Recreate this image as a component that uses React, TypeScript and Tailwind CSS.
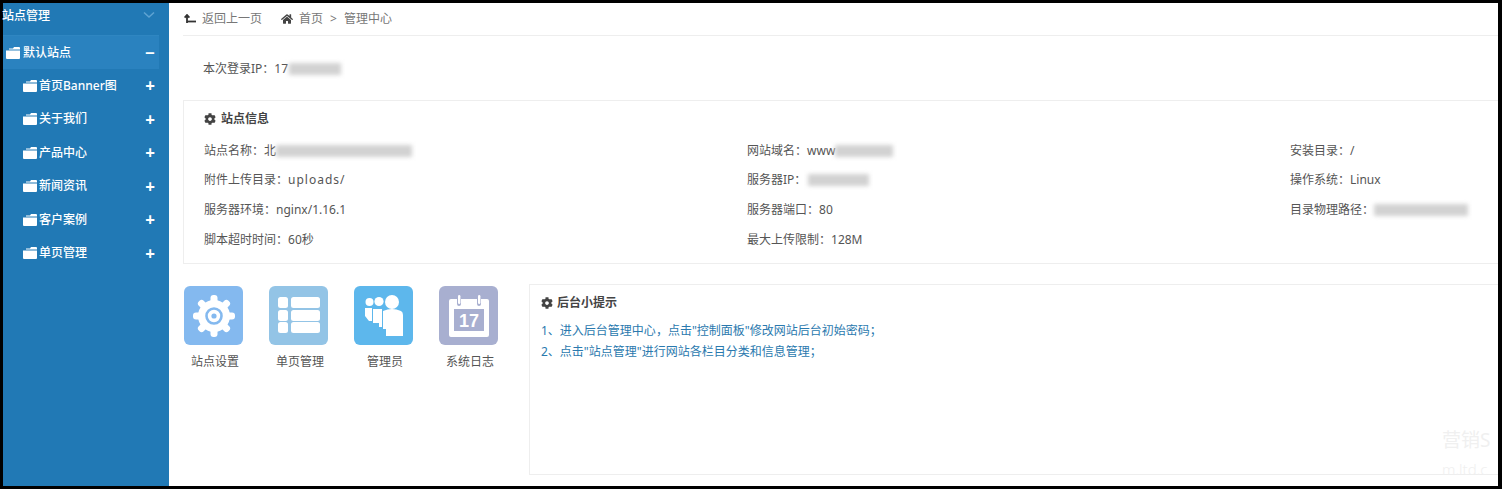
import React from "react";
import { FaCog, FaHome } from "react-icons/fa";

const cjk = { fontFamily: '"Noto Sans", "Noto Sans CJK SC", sans-serif' };

const menu = ["首页Banner图", "关于我们", "产品中心", "新闻资讯", "客户案例", "单页管理"];

// full-width punctuation
const COLON = "\uFF1A";
const COMMA = "\uFF0C";
const SEMI = "\uFF1B";

const Smudge = ({ className }: { className: string }) => (
  <span className={`inline-block h-[12px] bg-[#d2d2d2] blur-[2px] align-middle ${className}`} />
);

const Folder = () => (
  <svg width="14" height="12" viewBox="0 0 14 12" className="shrink-0" fill="#fff">
    <path d="M3 1.5 H7 L8 0 H13 a1 1 0 0 1 1 1 V2.4 H3 Z" />
    <path d="M0 3.4 H14 V11 a1 1 0 0 1-1 1 H1 a1 1 0 0 1-1-1 Z" />
  </svg>
);

const SideRow = ({ label }: { label: string }) => (
  <div className="h-[33.5px] flex items-center pl-[20px] pr-[14px] text-white">
    <Folder />
    <span className="ml-[2px] flex-1 font-medium">{label}</span>
    <span className="text-[17px] font-bold leading-none">+</span>
  </div>
);

const Info = ({ label, children }: { label: string; children?: React.ReactNode }) => (
  <div className="h-[29.6px] flex items-center whitespace-nowrap">
    {label}
    {COLON}
    {children}
  </div>
);

const Tile = ({ color, label, children }: { color: string; label: string; children: React.ReactNode }) => (
  <div className="w-[85px] shrink-0">
    <div className={`w-[59px] h-[59px] rounded-[6px] flex items-center justify-center ${color}`}>{children}</div>
    <div className="w-[62px] mt-[8px] text-center whitespace-nowrap text-[#555]">{label}</div>
  </div>
);

const GearIcon = () => (
  <svg width="44" height="44" viewBox="0 0 44 44">
    <g fill="#fff">
      {[0, 45, 90, 135, 180, 225, 270, 315].map((a) => (
        <rect key={a} x="18.5" y="1" width="7" height="10" rx="3" transform={`rotate(${a} 22 22)`} />
      ))}
      <circle cx="22" cy="22" r="16" />
    </g>
    <circle cx="22" cy="22" r="7.5" fill="none" stroke="#84b9ef" strokeWidth="2.6" />
    <circle cx="22" cy="22" r="2.6" fill="#84b9ef" />
  </svg>
);

const ListIcon = () => (
  <svg width="42" height="37" viewBox="0 0 42 37" fill="#fff">
    {[0, 13, 25].map((y) => (
      <g key={y}>
        <rect x="0" y={y} width="10" height="11" rx="2.5" />
        <rect x="13" y={y} width="29" height="11" rx="2.5" />
      </g>
    ))}
  </svg>
);

const PeopleIcon = () => (
  <svg width="38" height="42" viewBox="0 0 38 42" fill="#fff">
    <circle cx="4.5" cy="7" r="4" />
    <circle cx="14" cy="6.5" r="4.6" />
    <circle cx="27" cy="7" r="7" />
    <path d="M0 13 H7 V26 H4 L0 21 Z" />
    <path d="M8 14 H17 V32 H14 V28 H8 Z" />
    <path d="M18 16 Q27 12 36 16 Q38 17 38 20 V41 H21 V34 H18 Z" />
  </svg>
);

const CalendarIcon = () => (
  <svg width="40" height="42" viewBox="0 0 40 42">
    <path d="M2 4 H8 V9 a2 2 0 0 0 4 0 V4 H28 V9 a2 2 0 0 0 4 0 V4 H38 a2 2 0 0 1 2 2 V40 a2 2 0 0 1-2 2 H2 a2 2 0 0 1-2-2 V6 a2 2 0 0 1 2-2 Z" fill="#fff" />
    <rect x="5" y="14" width="30" height="22" fill="#a8afd0" />
    <rect x="9" y="0" width="2.4" height="9" rx="1.2" fill="#fff" />
    <rect x="29" y="0" width="2.4" height="9" rx="1.2" fill="#fff" />
    <text x="20" y="31.5" textAnchor="middle" fontSize="18" fontWeight="700" fill="#fff" fontFamily="Liberation Sans, sans-serif">17</text>
  </svg>
);

export default function App() {
  return (
    <div style={cjk} className="relative w-[1502px] h-[489px] overflow-hidden bg-black pt-[3px] pl-[3px] pr-[4px] pb-[3px] text-[12px] text-[#555]">
      <div className="flex h-full bg-white">
        {/* Sidebar */}
        <aside className="w-[166px] shrink-0 bg-[#2179b5]">
          <div className="h-[32px] flex justify-between pt-[4px] pr-[14px] text-white font-medium">
            <span className="-ml-[1px]">站点管理</span>
            <svg width="12" height="8" viewBox="0 0 12 8" fill="none" stroke="#5ea3d2" strokeWidth="1.6" className="mt-[4px]">
              <path d="M1 1.5 L6 6 L11 1.5" />
            </svg>
          </div>
          <div className="mr-[10px] h-[34px] flex items-center pl-[3px] pr-[4px] border-t border-[#2f86c1] bg-[#2a82bf] text-white">
            <Folder />
            <span className="ml-[3px] flex-1 font-medium">默认站点</span>
            <span className="text-[17px] font-bold leading-none">−</span>
          </div>
          {menu.map((m) => (
            <SideRow key={m} label={m} />
          ))}
        </aside>

        {/* Main */}
        <main className="flex-1 min-w-0 pl-[14px]">
          <div className="h-[33px] flex items-center border-b border-[#eeeeee] pl-[1px] text-[#777]">
            <svg width="12" height="10" viewBox="0 0 12 10" fill="none" stroke="#333" strokeWidth="1.8">
              <path d="M3 9 V2 M0.6 3.6 L3 1 L5.4 3.6" />
              <path d="M3 7.5 H12" />
            </svg>
            <span className="ml-[6px]">返回上一页</span>
            <FaHome className="ml-[19px] text-[#444] text-[12px]" />
            <span className="ml-[6px]">首页</span>
            <span className="mx-[7px]">&gt;</span>
            <span>管理中心</span>
          </div>

          <div className="h-[64px] flex items-center pl-[20px] pt-[2px]">
            本次登录IP{COLON}17
            <Smudge className="w-[52px] ml-[1px]" />
          </div>

          <section className="h-[164px] border border-r-0 border-[#eeeeee] pl-[20px] pt-[9px]">
            <div className="h-[18px] flex items-center font-bold text-[#444]">
              <FaCog className="text-[12px] mr-[5px]" />
              站点信息
            </div>
            <div className="grid grid-cols-[543px_543px_1fr] mt-[8px]">
              <div>
                <Info label="站点名称">
                  北
                  <Smudge className="w-[136px]" />
                </Info>
                <Info label="附件上传目录">
                  <span className="tracking-[1px]">uploads/</span>
                </Info>
                <Info label="服务器环境">nginx/1.16.1</Info>
                <Info label="脚本超时时间">60秒</Info>
              </div>
              <div>
                <Info label="网站域名">
                  www
                  <Smudge className="w-[58px]" />
                </Info>
                <Info label="服务器IP">
                  <Smudge className="w-[61px] ml-[2px]" />
                </Info>
                <Info label="服务器端口">80</Info>
                <Info label="最大上传限制">128M</Info>
              </div>
              <div>
                <Info label="安装目录">/</Info>
                <Info label="操作系统">Linux</Info>
                <Info label="目录物理路径">
                  <Smudge className="w-[94px]" />
                </Info>
              </div>
            </div>
          </section>

          <div className="flex mt-[20px]">
            <div className="w-[346px] shrink-0 flex pt-[2px] pl-[1px]">
              <Tile color="bg-[#84b9ef]" label="站点设置">
                <GearIcon />
              </Tile>
              <Tile color="bg-[#93c4e6]" label="单页管理">
                <ListIcon />
              </Tile>
              <Tile color="bg-[#5db7ec]" label="管理员">
                <PeopleIcon />
              </Tile>
              <Tile color="bg-[#a8afd0]" label="系统日志">
                <CalendarIcon />
              </Tile>
            </div>
            <section className="flex-1 h-[191px] border border-r-0 border-[#eeeeee] pl-[11px] pt-[9px]">
              <div className="h-[18px] flex items-center font-bold text-[#444]">
                <FaCog className="text-[12px] mr-[4px]" />
                后台小提示
              </div>
              <div className="mt-[8px] text-[#2a79ae]">
                <div className="h-[21px] flex items-center">
                  1、进入后台管理中心{COMMA}点击"控制面板"修改网站后台初始密码{SEMI}
                </div>
                <div className="h-[21px] flex items-center">
                  2、点击"站点管理"进行网站各栏目分类和信息管理{SEMI}
                </div>
              </div>
            </section>
          </div>
        </main>
      </div>

      {/* watermark over the page corner */}
      <div className="absolute left-[1442px] top-[428px] w-[50px] overflow-hidden whitespace-nowrap text-[#f0f0f0] pointer-events-none">
        <div className="text-[19px] leading-[24px]">营销S</div>
        <div className="mt-[8px] text-[15px] leading-[18px] font-light">m.ltd.c</div>
      </div>
    </div>
  );
}
